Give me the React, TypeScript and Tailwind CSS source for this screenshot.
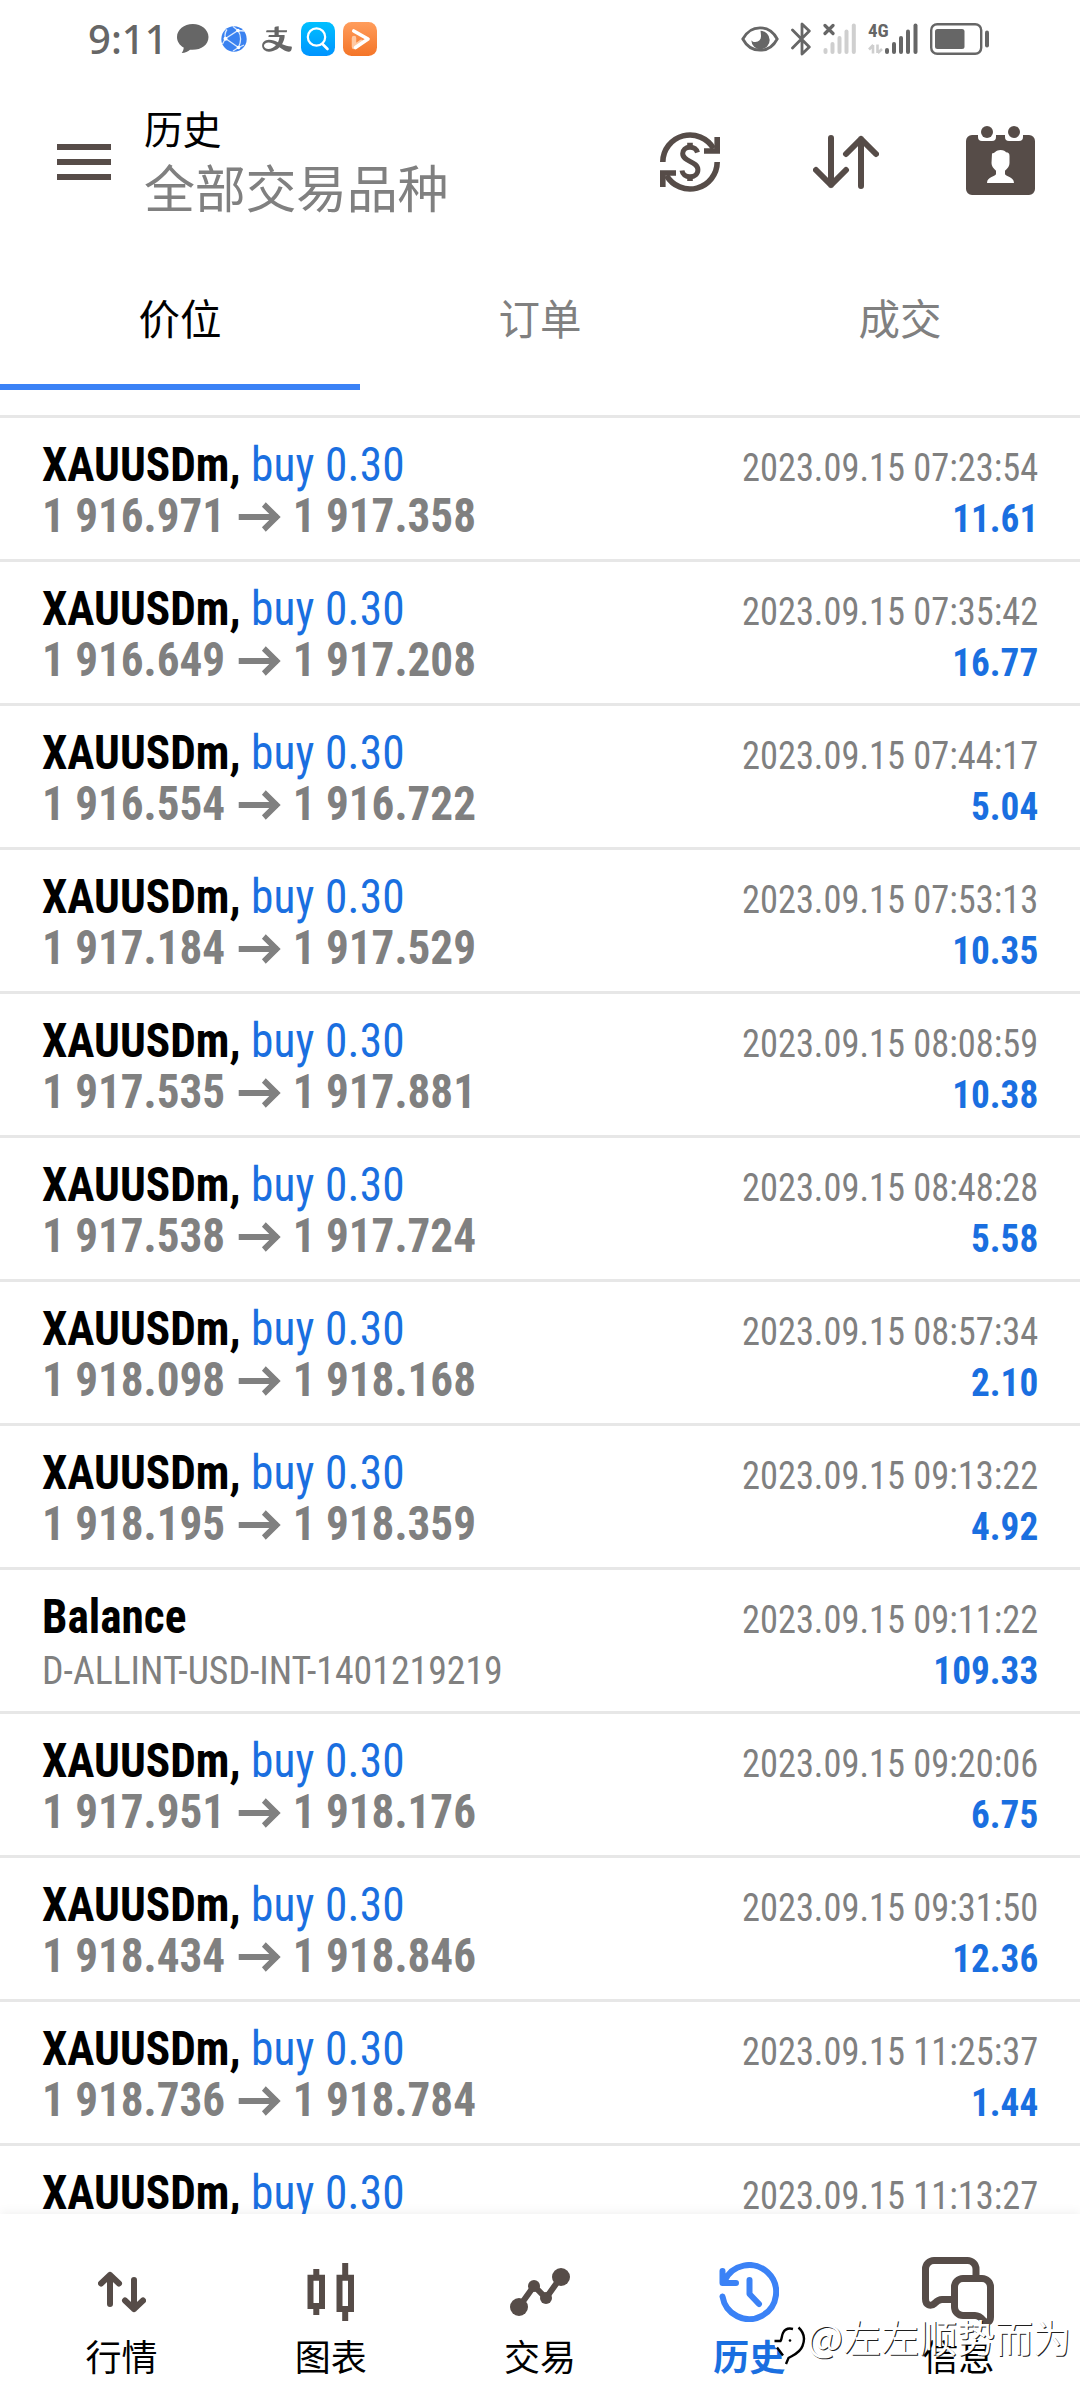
import React from 'react'
import { AiOutlineAlipay } from 'react-icons/ai'

type Deal = {
  title: string
  side?: string
  from?: string
  to?: string
  note?: string
  time: string
  profit?: string
}

const deals: Deal[] = [
  { title: 'XAUUSDm,', side: 'buy 0.30', from: '1 916.971', to: '1 917.358', time: '2023.09.15 07:23:54', profit: '11.61' },
  { title: 'XAUUSDm,', side: 'buy 0.30', from: '1 916.649', to: '1 917.208', time: '2023.09.15 07:35:42', profit: '16.77' },
  { title: 'XAUUSDm,', side: 'buy 0.30', from: '1 916.554', to: '1 916.722', time: '2023.09.15 07:44:17', profit: '5.04' },
  { title: 'XAUUSDm,', side: 'buy 0.30', from: '1 917.184', to: '1 917.529', time: '2023.09.15 07:53:13', profit: '10.35' },
  { title: 'XAUUSDm,', side: 'buy 0.30', from: '1 917.535', to: '1 917.881', time: '2023.09.15 08:08:59', profit: '10.38' },
  { title: 'XAUUSDm,', side: 'buy 0.30', from: '1 917.538', to: '1 917.724', time: '2023.09.15 08:48:28', profit: '5.58' },
  { title: 'XAUUSDm,', side: 'buy 0.30', from: '1 918.098', to: '1 918.168', time: '2023.09.15 08:57:34', profit: '2.10' },
  { title: 'XAUUSDm,', side: 'buy 0.30', from: '1 918.195', to: '1 918.359', time: '2023.09.15 09:13:22', profit: '4.92' },
  { title: 'Balance', note: 'D-ALLINT-USD-INT-1401219219', time: '2023.09.15 09:11:22', profit: '109.33' },
  { title: 'XAUUSDm,', side: 'buy 0.30', from: '1 917.951', to: '1 918.176', time: '2023.09.15 09:20:06', profit: '6.75' },
  { title: 'XAUUSDm,', side: 'buy 0.30', from: '1 918.434', to: '1 918.846', time: '2023.09.15 09:31:50', profit: '12.36' },
  { title: 'XAUUSDm,', side: 'buy 0.30', from: '1 918.736', to: '1 918.784', time: '2023.09.15 11:25:37', profit: '1.44' },
  { title: 'XAUUSDm,', side: 'buy 0.30', time: '2023.09.15 11:13:27' },
]

function StatusBar() {
  return (
    <div className="flex h-[78px] shrink-0 items-center pl-[88px] pr-[90px] text-[#666666]">
      <span className="w-[79px] font-['Noto_Sans'] text-[40px] font-medium leading-[56px]">9:11</span>
      <svg className="ml-[10px]" width="32" height="32" viewBox="0 0 32 32" fill="currentColor">
        <path d="M15.8 1C7 1 0 6.800 0 14c0 4.500 2.600 8.300 6.700 10.600 0 2-.8 4-2 5.400 3.500-.2 6.300-1.500 8.300-3.300 10.300 1 18.500-4.400 18.500-12.700C31.500 6.800 24.600 1 15.800 1z" />
      </svg>
      <svg className="ml-[12px]" width="26" height="26" viewBox="0 0 26 26">
        <circle cx="13" cy="13" r="12.700" fill="#3b82f0" />
        <g fill="none" stroke="#dbe9fd" strokeWidth="1.300">
          <path d="M4.500 12.500L17 4.500C20 9 20.500 15 17.500 21.500L4.500 12.500M4.500 12.500C3.500 9 4 6 6 3.500M4.500 12.500C3 15 2 17 1.500 18M17 4.500L12 .5M17 4.500L23 5M17.500 21.500L12 25M17.500 21.500L23 19" />
        </g>
        <g fill="#fff">
          <circle cx="4.500" cy="12.800" r="2" />
          <circle cx="17" cy="4.500" r="1.800" />
          <circle cx="17.500" cy="21.500" r="1.800" />
        </g>
      </svg>
      <AiOutlineAlipay className="ml-[13px]" size={34} />
      <svg className="ml-[7px]" width="34" height="34" viewBox="0 0 34 34" fill="none">
        <defs>
          <linearGradient id="find" x1="0" y1="0" x2="0" y2="1">
            <stop offset="0" stopColor="#00c0ff" />
            <stop offset="1" stopColor="#0094ff" />
          </linearGradient>
        </defs>
        <rect width="34" height="34" rx="8.500" fill="url(#find)" />
        <circle cx="15.500" cy="15" r="8.700" stroke="#fff" strokeWidth="2.200" />
        <path d="M21.500 22l5 5" stroke="#fff" strokeWidth="2.600" strokeLinecap="round" />
      </svg>
      <svg className="ml-[8px]" width="34" height="34" viewBox="0 0 34 34" fill="none">
        <defs>
          <linearGradient id="video" x1="0" y1="0" x2="0" y2="1">
            <stop offset="0" stopColor="#ff9d5c" />
            <stop offset="1" stopColor="#f47528" />
          </linearGradient>
        </defs>
        <rect width="34" height="34" rx="8.500" fill="url(#video)" />
        <path d="M11 16v9L18 20" stroke="#ffc9a3" strokeWidth="4.500" strokeLinejoin="round" strokeLinecap="round" />
        <path d="M10.800 9L25 17 12.500 25.500" stroke="#fff" strokeWidth="3.600" strokeLinejoin="round" strokeLinecap="round" />
      </svg>

      <svg className="ml-auto" width="38" height="26" viewBox="0 0 38 26" fill="none">
        <path d="M1.800 13C5.500 6 11.500 1.800 19 1.800S32.500 6 36.200 13C32.500 20 26.500 24.200 19 24.200S5.500 20 1.800 13z" stroke="currentColor" strokeWidth="2.800" />
        <path d="M19.500 4.800a9.200 9.200 0 1 1-9.200 9.500c1 1.500 2.500 2 4 1.700 4-.5 6-3 5.700-6.500-.1-1.900-.3-3.300-.5-4.700z" fill="currentColor" />
      </svg>
      <svg className="ml-[12px]" width="20" height="34" viewBox="0 0 20 34" fill="none" stroke="currentColor" strokeWidth="2.800" strokeLinecap="round" strokeLinejoin="round">
        <path d="M1.500 8L18.300 25 11 32V20M1.500 26L18.300 9 11 2V14" />
      </svg>
      <svg className="ml-[12px]" width="35" height="32" viewBox="0 0 35 32">
        <path d="M2 2.500l8 8M10 2.500l-8 8" stroke="currentColor" strokeWidth="3.200" strokeLinecap="round" />
        <g fill="#cfcfcf">
          <rect x=".5" y="25" width="4" height="6" rx="2" />
          <rect x="7.500" y="19" width="4" height="12" rx="2" />
          <rect x="14.500" y="13" width="4" height="18" rx="2" />
          <rect x="21.500" y="6.500" width="4" height="24.500" rx="2" />
          <rect x="28.800" y=".5" width="4" height="30.500" rx="2" />
        </g>
      </svg>
      <svg className="ml-[10px] overflow-visible" width="50" height="32" viewBox="0 0 50 32" fill="currentColor">
        <text x="0" y="14" className="font-['Roboto_Condensed'] text-[19px] font-bold">4G</text>
        <path d="M5 22v8.500M5.300 22L1 26.500M9.500 21.500v8.500M9.800 30l4.200-4" stroke="#cfcfcf" strokeWidth="2.600" />
        <rect x="17" y="25" width="4" height="6" rx="2" />
        <rect x="24" y="19" width="4" height="12" rx="2" />
        <rect x="31" y="13" width="4" height="18" rx="2" />
        <rect x="38" y="6.500" width="4" height="24.500" rx="2" />
        <rect x="45.500" y=".5" width="4" height="30.500" rx="2" />
      </svg>
      <svg className="ml-[12px]" width="60" height="32" viewBox="0 0 60 32" fill="currentColor">
        <rect x="1.200" y="1.200" width="50" height="29.600" rx="6" fill="none" stroke="currentColor" strokeWidth="2.400" />
        <rect x="5" y="6" width="29.500" height="20" rx="2.500" />
        <rect x="55" y="7.500" width="4" height="17" rx="2" />
      </svg>
    </div>
  )
}

function Header() {
  return (
    <div className="mt-[2px] flex h-[164px] shrink-0 items-center pl-[57px] pr-[45px] text-[#564c48]">
      <div className="flex w-[54px] flex-col gap-[9px]">
        <div className="h-[6px] bg-[#564c48]" />
        <div className="h-[6px] bg-[#564c48]" />
        <div className="h-[6px] bg-[#564c48]" />
      </div>
      <div className="ml-[33px]">
        <p className="text-[39px] leading-[58px] tracking-[-0.5px] text-black">历史</p>
        <p className="text-[51px] leading-[62px] tracking-[-0.3px] text-[#808080]">全部交易品种</p>
      </div>
      <svg className="ml-auto" width="60" height="60" viewBox="0 0 60 60" fill="none" stroke="currentColor" strokeWidth="5.600">
        <path d="M2.800 30A27.200 27.200 0 0 1 53.500 16.500" />
        <path d="M57.200 5v14H44" />
        <path d="M57.200 30A27.200 27.200 0 0 1 6.500 43.500" />
        <path d="M2.800 55V41H16" />
        <path d="M37.500 20.500c-1-3.300-4-5.200-7.500-5.200-4.500 0-7.300 2.700-7.300 6.300 0 8.500 15.200 7.200 15.200 16.200 0 4.200-3.300 7-7.900 7-4.500 0-7.500-2.500-8-6.300" strokeWidth="5" />
        <path d="M30 10.700V16M30 44v5" />
      </svg>
      <svg className="ml-[93px]" width="66" height="54" viewBox="0 0 66 54" fill="none" stroke="currentColor" strokeWidth="6" strokeLinecap="round" strokeLinejoin="round">
        <path d="M18 3v47M3 35l15 15 15-15M48 51V4M33 19L48 4l15 15" />
      </svg>
      <svg className="-mt-[3px] ml-[87px]" width="69" height="69" viewBox="0 0 69 69" fill="currentColor">
        <path d="M6 9h6v2a4 4 0 0 0 4 4h10a4 4 0 0 0 4-4V9h9v2a4 4 0 0 0 4 4h10a4 4 0 0 0 4-4V9h6a6 6 0 0 1 6 6v48a6 6 0 0 1-6 6H6a6 6 0 0 1-6-6V15a6 6 0 0 1 6-6z" />
        <circle cx="21" cy="6" r="6" />
        <circle cx="48" cy="6" r="6" />
        <path d="M26 27.500c2.500 0 4-3.500 8.500-3.500 3 0 5 1 5.500 2.300 2.500 0 3.500 1.200 3.500 3.700v7c0 3-1.500 5-4.500 7.700v3.300c0 2.500 9 2.500 9 9H21c0-6.500 9-6.500 9-9v-3.300c-3-2.700-4.500-4.700-4.500-7.700z" fill="#fff" />
      </svg>
    </div>
  )
}

function Tabs() {
  return (
    <div className="flex h-[146px] shrink-0 text-center text-[41.500px] leading-[60px] text-[#808080]">
      <div className="flex-1 border-b-[6px] border-[#3b82f6] pt-[47px] text-black">价位</div>
      <div className="flex-1 pt-[47px]">订单</div>
      <div className="flex-1 pt-[47px]">成交</div>
    </div>
  )
}

function DealRow({ deal }: { deal: Deal }) {
  return (
    <div className="flex h-[144px] shrink-0 justify-between whitespace-nowrap border-t-[3px] border-[#e7e7e7] px-[42px] pt-[21px] leading-[51px]">
      <div>
        <p className="origin-left scale-x-[0.944] text-[48px] font-bold text-black">
          {deal.title} {deal.side && <span className="font-normal tracking-[0.15px] text-[#1a6fe0]">{deal.side}</span>}
        </p>
        {deal.note && <p className="origin-left scale-x-[0.968] pt-[4px] text-[39px] text-[#808080]">{deal.note}</p>}
        {deal.from && (
          <p className="flex origin-left scale-x-[0.94] items-center text-[48px] font-bold text-[#808080]">
            {deal.from}
            <svg className="ml-[14px] mr-[12px] mt-[3px]" width="46" height="30" viewBox="0 0 46 30" fill="none" stroke="currentColor" strokeWidth="6">
              <path d="M0 15h42M27 2.500L40.500 15 27 27.500" />
            </svg>
            {deal.to}
          </p>
        )}
      </div>
      <div className="pt-[4px] text-right text-[39px]">
        <p className="origin-right scale-x-[0.934] text-[#808080]">{deal.time}</p>
        {deal.profit && <p className="origin-right scale-x-[0.955] font-bold text-[#1a6fe0]">{deal.profit}</p>}
      </div>
    </div>
  )
}

function NavItem({ label, active, children }: { label: string; active?: boolean; children: React.ReactNode }) {
  return (
    <div className={`flex flex-1 flex-col items-center ${active ? 'text-[#3b82f6]' : 'text-[#564c48]'}`}>
      <div className="flex h-[72px] items-center">{children}</div>
      <p className={`mt-[9px] text-[36px] leading-[44px] ${active ? 'font-bold text-[#1a6fe0]' : 'text-black'}`}>{label}</p>
    </div>
  )
}

function BottomNav() {
  return (
    <div className="relative flex h-[186px] shrink-0 bg-white px-[17px] pt-[42px] shadow-[0_-2px_10px_rgba(0,0,0,0.06)]">
      <NavItem label="行情">
        <svg width="48" height="42" viewBox="0 0 48 42" fill="none" stroke="currentColor" strokeWidth="6" strokeLinecap="round" strokeLinejoin="round">
          <path d="M12 33V4M3 12.500L12 4l9 8.500M36 9v29M27 29.500l9 8.500 9-8.500" />
        </svg>
      </NavItem>
      <NavItem label="图表">
        <svg width="48" height="60" viewBox="0 0 48 60" fill="none" stroke="currentColor" strokeWidth="6">
          <path d="M3.500 15.700H15V44H3.500zM32.500 15.700H44V47H32.500zM9.300 7v6M9.300 47v6M38.200 1v12M38.200 50v9" />
        </svg>
      </NavItem>
      <NavItem label="交易">
        <svg width="60" height="48" viewBox="0 0 60 48" fill="currentColor">
          <path d="M9 39L24 18 36 30 51 9" fill="none" stroke="currentColor" strokeWidth="6" />
          <circle cx="9" cy="39" r="9" />
          <circle cx="24" cy="18" r="6" />
          <circle cx="36" cy="30" r="6" />
          <circle cx="51" cy="9" r="9" />
        </svg>
      </NavItem>
      <NavItem label="历史" active>
        <svg width="60" height="60" viewBox="0 0 60 60" fill="none" stroke="currentColor" strokeWidth="6" strokeLinecap="round" strokeLinejoin="round">
          <path d="M3.500 34.500A27 27 0 1 0 5.500 19M3.500 9v12H17M30.500 18v14l9.500 10" />
        </svg>
      </NavItem>
      <NavItem label="信息">
        <svg width="72" height="70" viewBox="0 0 72 70" fill="none" stroke="currentColor" strokeWidth="7" strokeLinejoin="round">
          <path d="M54 18v-6a8.500 8.500 0 0 0-8.500-8.500H12A8.500 8.500 0 0 0 3.500 12v30c0 6 5 8 9 4.500 2.500-2.500 4-4 7.500-4h11" />
          <path d="M41 21.500h19a8.500 8.500 0 0 1 8.500 8.500v30c0 5-3.500 7-7 3.500-2.500-3-4.500-5-8.500-5H41a8.500 8.500 0 0 1-8.500-8.500V30a8.500 8.500 0 0 1 8.500-8.500z" />
        </svg>
      </NavItem>

      {/* author mark laid over the bar */}
      <div className="absolute left-[773px] top-[91px] flex items-center whitespace-nowrap text-white">
        <svg className="mt-[21px]" width="34" height="40" viewBox="0 0 34 40" fill="none">
          <path d="M8 15L11 5 20 1l8 3 3 12-5 13-10 8-5-7-9-9-1-5z" fill="#fff" />
          <path d="M25.500 1.500c5 4.500 7 11 4 18.500-2.500 7-9 9-14 12l-2.500 6M20 3c-4-1-8 0-10 4-1.500 3-1 6-2.500 8H1.500M4 21.500l6 8" stroke="#000" strokeWidth="2.400" />
          <circle cx="17" cy="14.500" r="1.300" fill="#000" />
        </svg>
        <span className="font-['Noto_Sans_CJK_SC'] text-[38px] leading-[48px] [text-shadow:1px_1px_0_rgba(0,0,0,0.9)]">@左左顺势而为</span>
      </div>
    </div>
  )
}

export default function App() {
  return (
    <div className="flex h-[2400px] w-[1080px] flex-col overflow-hidden bg-white font-['Roboto_Condensed','Noto_Sans_CJK_SC',sans-serif]">
      <StatusBar />
      <Header />
      <Tabs />
      <div className="mt-[25px] flex min-h-0 flex-1 flex-col overflow-hidden">
        {deals.map((deal) => (
          <DealRow key={deal.time} deal={deal} />
        ))}
      </div>
      <BottomNav />
    </div>
  )
}
